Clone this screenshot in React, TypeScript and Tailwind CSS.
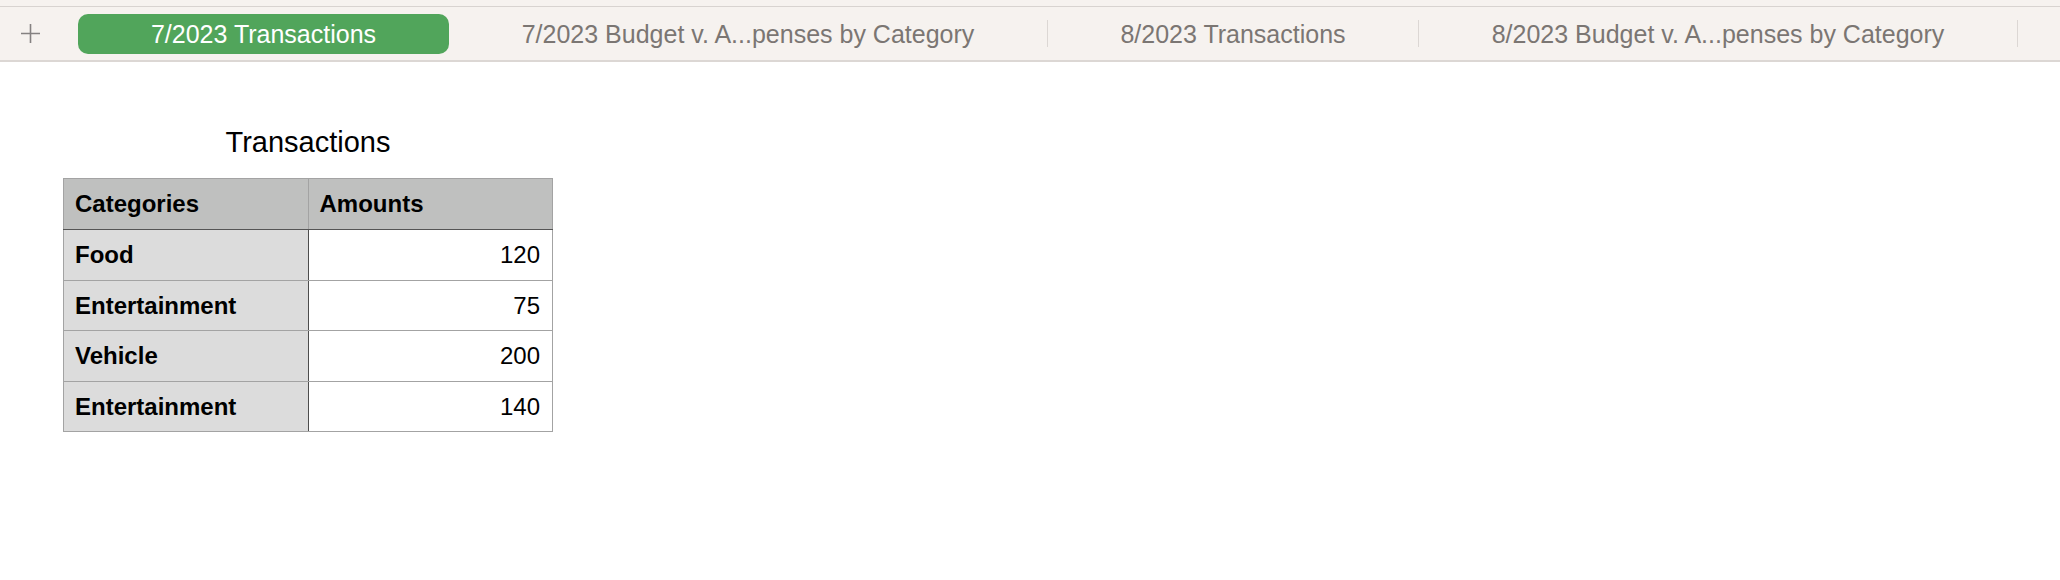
import React from 'react';

const tabs = [
  { label: '7/2023 Transactions', width: 'w-[371px]', active: true },
  { label: '7/2023 Budget v. A...penses by Category', width: 'w-[598px]', active: false },
  { label: '8/2023 Transactions', width: 'w-[370px]', active: false },
  { label: '8/2023 Budget v. A...penses by Category', width: 'w-[598px]', active: false },
];

const rows = [
  { category: 'Food', amount: 120 },
  { category: 'Entertainment', amount: 75 },
  { category: 'Vehicle', amount: 200 },
  { category: 'Entertainment', amount: 140 },
];

export default function App() {
  return (
    <div className="min-h-[580px] w-[2060px] bg-white font-['Liberation_Sans',Arial,sans-serif]">
      {/* Sheet tabs */}
      <div className="bg-[#f6f2ef] pt-[6px]">
        <div className="flex h-[56px] items-center border-t border-b-2 border-t-[#d8d3d0] border-b-[#dcd7d4] pl-[21px]">
          <svg width="19" height="19" viewBox="0 0 19 19" className="mr-[38px] shrink-0">
            <path d="M9.5 0v19M0 9.5h19" stroke="#858181" strokeWidth="1.6" />
          </svg>
          {tabs.map((tab, i) => (
            <div key={i} className="flex items-center">
              <div
                className={`${tab.width} flex h-[40px] items-center justify-center rounded-[10px] pt-[2px] text-[25px] ${
                  tab.active ? 'bg-[#51a55b] text-white' : 'text-[#7b7673]'
                }`}
              >
                {tab.label}
              </div>
              {!tab.active && <div className="h-[27px] w-px bg-[#dcd7d4]" />}
            </div>
          ))}
        </div>
      </div>

      {/* Table */}
      <div className="pl-[63px] pt-[64px]">
        <div className="w-[490px]">
          <div className="mb-[19px] text-center text-[29px] leading-[33px] text-black">Transactions</div>
          <table className="w-[490px] table-fixed border-collapse text-[24px] text-black">
            <thead>
              <tr className="h-[51px] bg-[#bfc0bf]">
                <th className="border border-[#a3a3a3] border-b-[#555555] px-[11px] text-left font-bold">Categories</th>
                <th className="border border-[#a3a3a3] border-b-[#555555] px-[11px] text-left font-bold">Amounts</th>
              </tr>
            </thead>
            <tbody>
              {rows.map((row, i) => (
                <tr key={i} className={i % 2 === 0 ? 'h-[51px]' : 'h-[50px]'}>
                  <td className="border border-[#a3a3a3] border-r-[#4d4d4d] bg-[#dcdcdc] px-[11px] font-bold">
                    {row.category}
                  </td>
                  <td className="border border-[#a3a3a3] bg-white px-[12px] text-right">{row.amount}</td>
                </tr>
              ))}
            </tbody>
          </table>
        </div>
      </div>
    </div>
  );
}
